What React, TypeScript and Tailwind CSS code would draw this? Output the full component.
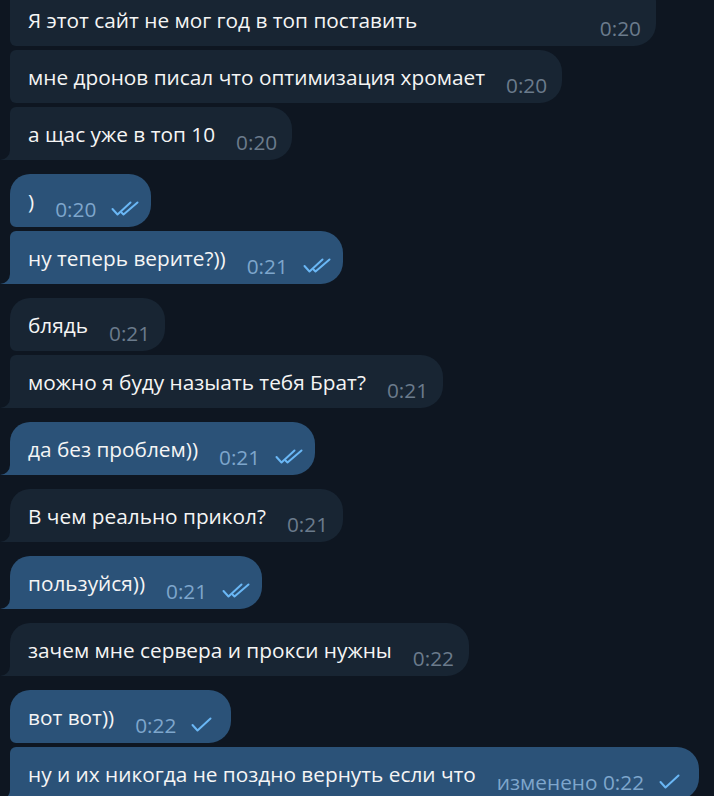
import React from 'react'

type Msg = {
  text: string
  time: string
  out?: boolean
  // position inside a group of messages from the same side
  first?: boolean
  last?: boolean
  read?: boolean
  edited?: boolean
}

const groups: Msg[][] = [
  [
    { text: 'мне дронов писал что оптимизация хромает', time: '0:20' },
    { text: 'а щас уже в топ 10', time: '0:20', last: true },
  ],
  [
    { text: ')', time: '0:20', out: true, first: true, read: true },
    { text: 'ну теперь верите?))', time: '0:21', out: true, last: true, read: true },
  ],
  [
    { text: 'блядь', time: '0:21', first: true },
    { text: 'можно я буду назыать тебя Брат?', time: '0:21', last: true },
  ],
  [{ text: 'да без проблем))', time: '0:21', out: true, first: true, last: true, read: true }],
  [{ text: 'В чем реально прикол?', time: '0:21', first: true, last: true }],
  [{ text: 'пользуйся))', time: '0:21', out: true, first: true, last: true, read: true }],
  [{ text: 'зачем мне сервера и прокси нужны', time: '0:22', first: true, last: true }],
  [
    { text: 'вот вот))', time: '0:22', out: true, first: true },
    { text: 'ну и их никогда не поздно вернуть если что', time: '0:22', out: true, edited: true, last: true },
  ],
]

function Checks({ read }: { read?: boolean }) {
  return (
    <svg width="30" height="15" viewBox="0 0 30 15" className="mt-[27px] ml-[15px] shrink-0" fill="none">
      <g stroke="#6ab7f5" strokeWidth="2" strokeLinecap="round" strokeLinejoin="round">
        <path d="M1.5 8 L6.5 13.5 L19.5 1.5" />
        {read && <path d="M10.5 11.5 L12.5 13.5 L26.5 1.5" />}
      </g>
    </svg>
  )
}

function Tail({ out }: { out?: boolean }) {
  return (
    <svg width="10" height="10" viewBox="0 0 10 10" className="absolute left-[-10px] bottom-0">
      <path d="M10 0 A10 10 0 0 1 0 10 H10 Z" fill={out ? '#2b5278' : '#182533'} />
    </svg>
  )
}

function Bubble({ m }: { m: Msg }) {
  const radius = [
    m.first ? 'rounded-tl-[20px]' : 'rounded-tl-[6px]',
    m.last ? 'rounded-bl-none' : 'rounded-bl-[6px]',
  ].join(' ')
  return (
    <div
      className={`relative flex items-start h-[53px] pl-[18px] rounded-r-[22px] ${radius} ${
        m.out ? 'bg-[#2b5278] pr-[10px]' : 'bg-[#182533] pr-[15px]'
      }`}
    >
      {m.last && <Tail out={m.out} />}
      <span className="pt-[13px] leading-[28px] whitespace-nowrap">{m.text}</span>
      <span
        className={`pt-[21px] leading-[28px] ml-[21px] whitespace-nowrap ${
          m.out ? 'text-[#7ea6cc]' : 'text-[#6b7b8c]'
        }`}
      >
        {m.edited ? 'изменено ' : ''}
        {m.time}
      </span>
      {m.out && <Checks read={m.read} />}
    </div>
  )
}

export default function App() {
  return (
    <div
      className="w-[714px] h-[796px] overflow-hidden bg-[#0e1621] text-[#f5f5f5] text-[20.8px]"
      style={{ fontFamily: '"Open Sans", "Noto Sans", sans-serif' }}
    >
      <div className="flex flex-col gap-[14px] pl-[10px] -mt-[20px]">
        <div className="flex flex-col items-start gap-[4px]">
          {/* first message is cut off by the top of the window */}
          <div className="flex items-end justify-between w-[646px] h-[66px] pl-[18px] pr-[15px] pb-[12px] bg-[#182533] rounded-tr-[22px] rounded-br-[22px] rounded-bl-[6px]">
            <span className="leading-[28px]">Я этот сайт не мог год в топ поставить</span>
            <span className="leading-[28px] -mb-[8px] text-[#6b7b8c]">0:20</span>
          </div>
          {groups[0].map((m, i) => (
            <Bubble key={i} m={m} />
          ))}
        </div>
        {groups.slice(1).map((g, gi) => (
          <div key={gi} className="flex flex-col items-start gap-[4px]">
            {g.map((m, i) => (
              <Bubble key={i} m={m} />
            ))}
          </div>
        ))}
      </div>
    </div>
  )
}
